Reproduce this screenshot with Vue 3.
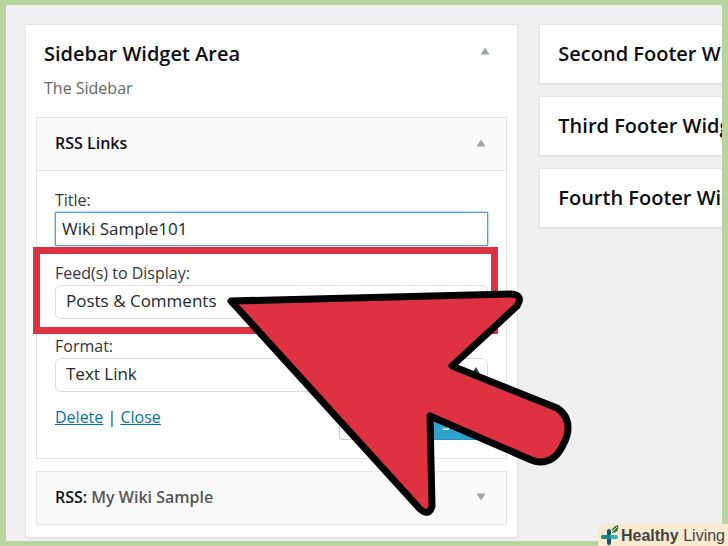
<template>
  <div class="page">
    <main class="columns">
      <section class="area">
        <header class="area-head">
          <div>
            <h2>Sidebar Widget Area</h2>
            <p>The Sidebar</p>
          </div>
          <button class="toggle" type="button" aria-label="Toggle area">
            <svg width="10" height="8" viewBox="0 0 10 8"><path d="M5 0.5L9.5 7.5H0.5z" /></svg>
          </button>
        </header>

        <div class="widget">
          <div class="widget-head">
            <h3>RSS Links</h3>
            <button class="toggle" type="button" aria-label="Close widget">
              <svg width="10" height="8" viewBox="0 0 10 8"><path d="M5 0.5L9.5 7.5H0.5z" /></svg>
            </button>
          </div>
          <form class="widget-body" @submit.prevent>
            <div class="field">
              <label for="title">Title:</label>
              <input id="title" v-model="title" type="text" />
            </div>
            <div v-for="field in selects" :key="field.id" class="field">
              <label :for="field.id">{{ field.label }}</label>
              <div class="select">
                <select :id="field.id" v-model="field.value">
                  <option v-for="option in field.options" :key="option">{{ option }}</option>
                </select>
                <svg class="arrows" width="8" height="16" viewBox="0 0 8 16">
                  <path d="M4 0L7.5 6H0.5zM4 16L7.5 10H0.5z" />
                </svg>
              </div>
              <div v-if="field.marked" class="marker"></div>
            </div>
            <div class="actions">
              <p>
                <a href="#">Delete</a> | <a href="#">Close</a>
              </p>
              <div class="buttons">
                <button class="button" type="button">Visibility</button>
                <button class="button primary" type="submit">Save</button>
              </div>
            </div>
          </form>
        </div>

        <div class="widget">
          <div class="widget-head last">
            <h3>RSS: <span>My Wiki Sample</span></h3>
            <button class="toggle" type="button" aria-label="Open widget">
              <svg width="10" height="8" viewBox="0 0 10 8"><path d="M5 7.5L9.5 0.5H0.5z" /></svg>
            </button>
          </div>
        </div>
      </section>

      <div class="footers">
        <section v-for="name in footers" :key="name" class="footer-area">
          <h2>{{ name }}</h2>
        </section>
      </div>
    </main>

    <svg class="cursor" width="348" height="224" viewBox="0 0 348 224">
      <path
        d="M13 14L293 7Q306 8 299 19L234 79L339 121Q350 128 350 141Q350 149 345 158Q337 175 322 175Q318 175 311 172L212 129L214 219Q211 230 202 222z"
        fill="#de3142"
        stroke="#000"
        stroke-width="7"
        stroke-linejoin="round"
      />
    </svg>

    <div class="brand">
      <svg width="20" height="22" viewBox="0 0 20 22">
        <path d="M9 6V18" stroke="#17545b" stroke-width="4" stroke-linecap="round" />
        <path d="M3 12H16" stroke="#35b0b5" stroke-width="4" stroke-linecap="round" />
        <path d="M3 12H9" stroke="#23858c" stroke-width="4" stroke-linecap="round" />
        <path d="M12 8Q11 2 18 0Q20 7 12 8z" fill="#2f7a35" />
        <path d="M12 7L17 2" stroke="#f6ead0" stroke-width="1" />
      </svg>
      <span><b>Healthy</b> Living</span>
    </div>
  </div>
</template>

<script setup>
import { ref } from 'vue'

const title = ref('Wiki Sample101')

const selects = ref([
  {
    id: 'feeds',
    label: 'Feed(s) to Display:',
    value: 'Posts & Comments',
    options: ['Posts', 'Comments', 'Posts & Comments'],
    marked: true
  },
  {
    id: 'format',
    label: 'Format:',
    value: 'Text Link',
    options: ['Text Link', 'Image Link', 'Text & Image Links'],
    marked: false
  }
])

const footers = ['Second Footer Widget Area', 'Third Footer Widget Area', 'Fourth Footer Widget Area']
</script>

<style>
body {
  margin: 0;
}
</style>

<style scoped>
* {
  box-sizing: border-box;
}
.page {
  position: relative;
  min-height: 100vh;
  border: 6px solid #b9d59f;
  border-top-width: 5px;
  background: #efefef;
  color: #32373c;
  font-family: 'Open Sans', sans-serif;
  font-size: 16px;
  line-height: 22px;
}
.columns {
  display: grid;
  grid-template-columns: minmax(0, 27fr) minmax(0, 10fr);
  align-items: start;
  gap: 21px;
  padding: 19px 0 3px 19px;
}
h2,
h3,
p {
  margin: 0;
}
h2 {
  color: #0c0f14;
  font-size: 20px;
  font-weight: 600;
  line-height: 28px;
  white-space: nowrap;
}
h3 {
  color: #0c0f14;
  font-size: 16px;
  font-weight: 600;
}
h3 span {
  color: #555;
}
.area,
.footer-area {
  border: 1px solid #e3e3e3;
  background: #fff;
  box-shadow: 0 1px 1px rgba(0, 0, 0, 0.04);
}
.area {
  padding: 0 10px 12px;
}
.area-head {
  display: flex;
  justify-content: space-between;
  padding: 15px 17px 18px 8px;
}
.area-head p {
  margin-top: 9px;
  color: #666;
}
.toggle {
  display: flex;
  align-items: center;
  height: 22px;
  padding: 0;
  border: 0;
  background: none;
}
.toggle path {
  fill: #a0a5aa;
}
.widget {
  border: 1px solid #e5e5e5;
}
.widget + .widget {
  margin-top: 12px;
}
.widget-head {
  display: flex;
  align-items: center;
  justify-content: space-between;
  height: 53px;
  padding: 0 20px 2px 18px;
  border-bottom: 1px solid #e5e5e5;
  background: #fafafa;
}
.widget-head.last {
  height: 52px;
  border-bottom: 0;
}
.widget-body {
  padding: 18px;
}
.field {
  position: relative;
  margin-bottom: 16px;
}
.field label {
  display: block;
  height: 23px;
}
input,
select {
  display: block;
  width: 100%;
  height: 34px;
  margin: 0;
  background: #fff;
  color: #23282d;
  font-family: inherit;
  font-size: 17px;
}
input {
  padding: 0 6px 2px;
  border: 1px solid #5b9dd9;
  outline: 0;
  box-shadow: 0 0 2px rgba(30, 140, 190, 0.8);
}
.select {
  position: relative;
}
select {
  padding: 0 30px 3px 10px;
  border: 1px solid #ddd;
  border-radius: 6px;
  appearance: none;
}
.arrows {
  position: absolute;
  top: 9px;
  right: 8px;
  fill: #32373c;
}
.marker {
  position: absolute;
  inset: -15px -10px -15px -22px;
  border: 7px solid #de3142;
}
.actions {
  display: flex;
  justify-content: space-between;
  margin-top: -1px;
}
.buttons {
  display: flex;
  gap: 6px;
}
.actions p {
  line-height: 20px;
}
a {
  color: #0073aa;
}
.button {
  height: 33px;
  padding: 0 11px;
  border: 1px solid #ccc;
  border-radius: 3px;
  background: #f7f7f7;
  color: #555;
  font-family: inherit;
  font-size: 16px;
}
.primary {
  border-color: #2e8cbe;
  background: #2ea2cc;
  color: #fff;
}
.footers {
  display: grid;
  gap: 12px;
}
.footer-area {
  overflow: hidden;
  padding: 15px 0 15px 18px;
  border-right: 0;
}
.cursor {
  position: absolute;
  top: 282px;
  left: 212px;
  overflow: visible;
}
.brand {
  position: absolute;
  right: -6px;
  bottom: -6px;
  display: flex;
  align-items: center;
  gap: 1px;
  height: 23px;
  padding: 0 3px 0 2px;
  border-radius: 8px 0 0 0;
  background: #f6ead0;
  color: #444;
  font-family: 'Liberation Sans', sans-serif;
  font-size: 16px;
  white-space: nowrap;
}
</style>
